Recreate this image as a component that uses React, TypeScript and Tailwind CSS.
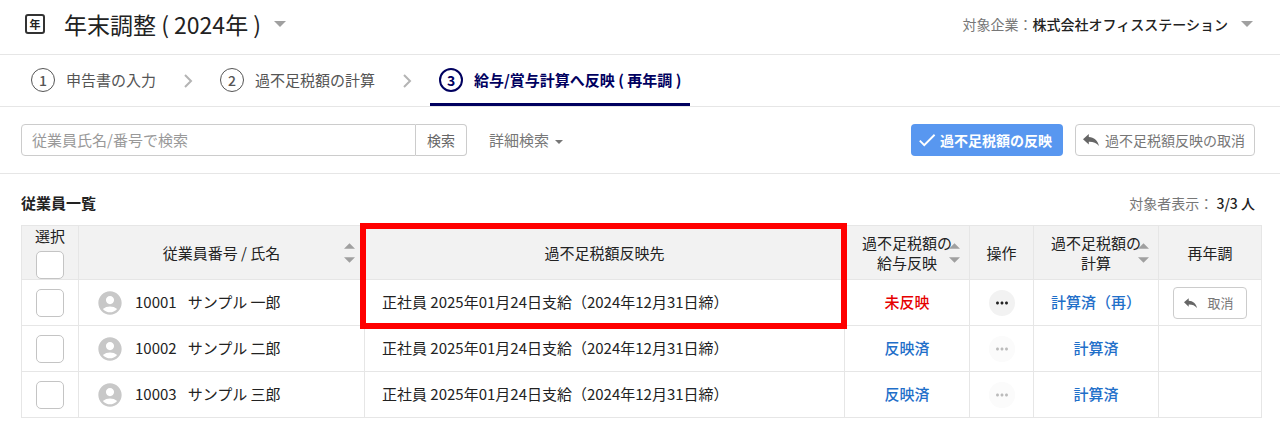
// src/App.tsx
import { useState } from "react";
import clsx from "clsx";
import { MdAccountCircle, MdCheck, MdMoreHoriz } from "react-icons/md";

type Employee = {
  id: string;
  name: string;
  target: string;
  reflected: boolean;
  calc: string;
  redo: boolean;
};

const TARGET = "正社員 2025年01月24日支給（2024年12月31日締）";

const employees: Employee[] = [
  { id: "10001", name: "サンプル 一郎", target: TARGET, reflected: false, calc: "計算済（再）", redo: true },
  { id: "10002", name: "サンプル 二郎", target: TARGET, reflected: true, calc: "計算済", redo: false },
  { id: "10003", name: "サンプル 三郎", target: TARGET, reflected: true, calc: "計算済", redo: false },
];

const steps = ["申告書の入力", "過不足税額の計算", "給与/賞与計算へ反映 ( 再年調 )"];

const Caret = ({ className }: { className?: string }) => (
  <svg viewBox="0 0 12 6" className={clsx("shrink-0 fill-[#a0a0a0]", className)} aria-hidden="true">
    <path d="M0 0h12L6 6z" />
  </svg>
);

const ReplyIcon = ({ className }: { className?: string }) => (
  <svg viewBox="0 0 16 12" className={clsx("shrink-0 fill-[#666]", className)} aria-hidden="true">
    <path d="M0 5.2L5.8 0v3.1C11 3.5 14.8 6.300 16 12c-2.600-3.200-5.800-4.400-10.200-4.300v2.900z" />
  </svg>
);

const SortButton = ({ label }: { label: string }) => (
  <button type="button" aria-label={label} className="absolute right-[9px] top-1/2 flex -translate-y-1/2 flex-col gap-2">
    <Caret className="h-[6px] w-[11px] rotate-180" />
    <Caret className="h-[6px] w-[11px]" />
  </button>
);

const CheckBox = ({ label, checked, onChange }: { label: string; checked: boolean; onChange: () => void }) => (
  <input
    type="checkbox"
    aria-label={label}
    checked={checked}
    onChange={onChange}
    className="block size-7 mx-auto appearance-none rounded-[5px] border border-[#c4c4c4] bg-white checked:bg-[#5897f0]"
  />
);

const Header = () => (
  <header className="flex items-center justify-between border-b border-[#e6e6e6] pb-[12px] pl-[25px] pr-[27px] pt-[6px]">
    <h1>
      <button type="button" className="flex items-center text-[23px] leading-9">
        <span className="mr-[19px] flex size-5 items-center justify-center rounded-[3px] border-2 border-[#333] text-[11px] font-bold leading-none">
          年
        </span>
        年末調整 ( 2024年 )
        <Caret className="ml-[13px] h-[6px] w-3" />
      </button>
    </h1>
    <button type="button" className="flex items-center text-sm">
      <span className="text-[#777]">対象企業：</span>
      <span className="font-medium">株式会社オフィスステーション</span>
      <Caret className="ml-[13px] h-[6px] w-3" />
    </button>
  </header>
);

const StepNav = ({ current }: { current: number }) => (
  <nav className="border-b border-[#e6e6e6] pl-[22px]">
    <ol className="flex text-[15px]">
      {steps.map((step, i) => (
        <li key={step} className="flex items-center">
          {i > 0 && (
            <svg viewBox="0 0 46 14" className="h-[14px] w-[46px] fill-none stroke-[#b4b4b4] stroke-2" aria-hidden="true">
              <path d="M20 1l6 6-6 6" />
            </svg>
          )}
          <a
            href="#"
            aria-current={i === current ? "step" : undefined}
            className={clsx(
              "flex items-center gap-[11px] border-b-[3px] px-[9px] pb-[11px] pt-[13px]",
              i === current ? "border-[#00005f] font-bold text-[#00005f]" : "border-transparent text-[#555]"
            )}
          >
            <span
              className={clsx(
                "flex size-6 items-center justify-center rounded-full border-current text-sm leading-none",
                i === current ? "border-2" : "border font-medium"
              )}
            >
              {i + 1}
            </span>
            {step}
          </a>
        </li>
      ))}
    </ol>
  </nav>
);

const Toolbar = () => {
  const [query, setQuery] = useState("");

  return (
    <div className="flex items-center justify-between border-b border-[#e6e6e6] pb-[17px] pl-[21px] pr-[25px] pt-[17px]">
      <form className="flex h-8 items-stretch" onSubmit={(e) => e.preventDefault()}>
        <input
          type="text"
          aria-label="従業員氏名/番号で検索"
          placeholder="従業員氏名/番号で検索"
          value={query}
          onChange={(e) => setQuery(e.target.value)}
          className="w-[395px] rounded-l border border-[#ccc] px-[10px] text-[15px] outline-none placeholder:text-[#999]"
        />
        <button type="submit" className="rounded-r border border-l-0 border-[#ccc] px-[11px] text-sm text-[#666]">
          検索
        </button>
        <button type="button" className="ml-[22px] flex items-center gap-[6px] text-[15px] text-[#777]">
          詳細検索
          <svg viewBox="0 0 8 4" className="mt-1 h-1 w-2 fill-current" aria-hidden="true">
            <path d="M0 0h8L4 4z" />
          </svg>
        </button>
      </form>
      <div className="flex gap-3 text-sm">
        <button type="button" className="flex h-8 items-center gap-[2px] rounded bg-[#5897f0] pl-[5px] pr-[11px] font-bold text-white">
          <MdCheck className="size-[22px]" />
          過不足税額の反映
        </button>
        <button type="button" className="flex h-8 items-center gap-[6px] rounded border border-[#ccc] pl-[7px] pr-[9px] text-[#777]">
          <ReplyIcon className="h-3 w-4" />
          過不足税額反映の取消
        </button>
      </div>
    </div>
  );
};

const cell = "border border-[#e6e6e6]";

const EmployeeTable = () => {
  const [selected, setSelected] = useState<string[]>([]);
  const allSelected = selected.length === employees.length;

  const toggle = (id: string) =>
    setSelected(selected.includes(id) ? selected.filter((s) => s !== id) : [...selected, id]);

  return (
    <table className="w-full table-fixed border-collapse text-[15px]">
      <thead>
        <tr className="h-[54px] bg-[#f2f2f2] leading-5">
          <th className={clsx(cell, "w-[57px] font-normal")}>
            <span className="block pb-[5px]">選択</span>
            <CheckBox
              label="すべて選択"
              checked={allSelected}
              onChange={() => setSelected(allSelected ? [] : employees.map((e) => e.id))}
            />
          </th>
          <th className={clsx(cell, "relative w-[286px] font-normal")}>
            従業員番号 / 氏名
            <SortButton label="従業員番号で並べ替え" />
          </th>
          <th className={clsx(cell, "relative font-normal")}>
            過不足税額反映先
            {/* red frame around the header and the first row */}
            <span className="pointer-events-none absolute -left-[5px] -right-[3px] -top-[3px] h-[106px] border-6 border-[#f00]" />
          </th>
          <th className={clsx(cell, "relative w-[125px] font-normal")}>
            過不足税額の
            <br />
            給与反映
            <SortButton label="給与反映で並べ替え" />
          </th>
          <th className={clsx(cell, "w-16 font-normal")}>操作</th>
          <th className={clsx(cell, "relative w-[125px] font-normal")}>
            過不足税額の
            <br />
            計算
            <SortButton label="計算で並べ替え" />
          </th>
          <th className={clsx(cell, "w-[103px] font-normal")}>再年調</th>
        </tr>
      </thead>
      <tbody>
        {employees.map((emp) => (
          <tr key={emp.id} className="h-[46px] text-center">
            <td className={cell}>
              <CheckBox label={emp.name} checked={selected.includes(emp.id)} onChange={() => toggle(emp.id)} />
            </td>
            <td className={cell}>
              <div className="flex items-center pl-[17px]">
                <MdAccountCircle className="mr-[11px] size-7 text-[#c8c8c8]" />
                <span className="mr-[11px]">{emp.id}</span>
                {emp.name}
              </div>
            </td>
            <td className={clsx(cell, "pl-[17px] text-left")}>{emp.target}</td>
            <td className={cell}>
              <a href="#" className={clsx("font-medium", emp.reflected ? "text-[#1f6fc9]" : "text-[#e60000]")}>
                {emp.reflected ? "反映済" : "未反映"}
              </a>
            </td>
            <td className={cell}>
              <button
                type="button"
                aria-label={`${emp.name}の操作`}
                disabled={emp.reflected}
                className="mx-auto flex size-[26px] items-center justify-center rounded-full bg-[#f2f2f2] disabled:opacity-30"
              >
                <MdMoreHoriz className="size-[18px]" />
              </button>
            </td>
            <td className={cell}>
              <a href="#" className="font-medium text-[#1f6fc9]">
                {emp.calc}
              </a>
            </td>
            <td className={cell}>
              {emp.redo && (
                <button
                  type="button"
                  className="mx-auto flex h-8 items-center gap-[10px] rounded border border-[#ccc] pl-[10px] pr-3 text-[13px] text-[#777]"
                >
                  <ReplyIcon className="h-[10px] w-[13px]" />
                  取消
                </button>
              )}
            </td>
          </tr>
        ))}
      </tbody>
    </table>
  );
};

export default function App() {
  return (
    <div className="bg-white font-['Noto_Sans_CJK_JP',sans-serif] text-[#222]">
      <Header />
      <StepNav current={2} />
      <Toolbar />
      <main className="pb-4 pl-[21px] pr-[18px]">
        <div className="flex items-center justify-between pb-[10px] pr-[7px] pt-[17px] leading-6">
          <h2 className="text-[15px] font-bold">従業員一覧</h2>
          <p className="text-sm text-[#777]">
            対象者表示： <span className="font-medium text-[#222]">3/3 人</span>
          </p>
        </div>
        <EmployeeTable />
      </main>
    </div>
  );
}
